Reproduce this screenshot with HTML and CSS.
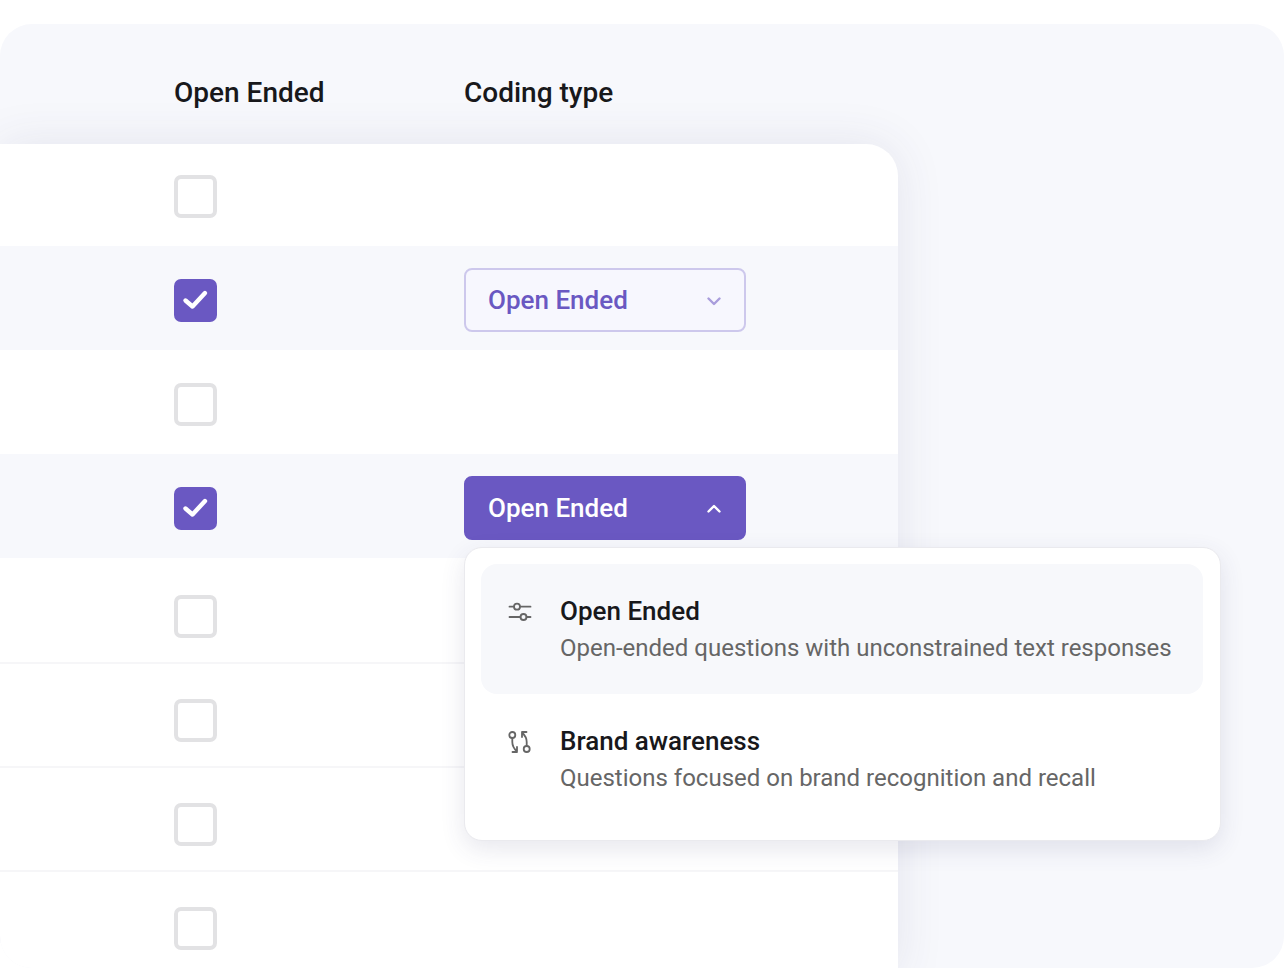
FILE: index.html
```html
<!DOCTYPE html>
<html lang="en">
<head>
<meta charset="utf-8">
<title>Coding type</title>
<link rel="stylesheet" href="styles.css">
</head>
<body>
<main class="panel">
  <header class="head">
    <div class="col-check">Open Ended</div>
    <div class="col-type">Coding type</div>
  </header>
  <section class="table">
    <div class="row first"><div class="col-check"><span class="box"></span></div></div>
    <div class="row tinted">
      <div class="col-check"><span class="box on"><svg width="28" height="28" viewBox="0 0 28 28" fill="none"><path d="M3.500 14.500L10.500 20.500 23 7" stroke="#fff" stroke-width="4.400" stroke-linecap="round" stroke-linejoin="round"/></svg></span></div>
      <div class="col-type">
        <div class="select">Open Ended
          <svg class="chev down" width="14" height="9" viewBox="0 0 14 9" fill="none"><path d="M1.500 1.500L7 7l5.500-5.500" stroke="#a99ddc" stroke-width="2.400" stroke-linecap="round" stroke-linejoin="round"/></svg>
        </div>
      </div>
    </div>
    <div class="row"><div class="col-check"><span class="box"></span></div></div>
    <div class="row tinted">
      <div class="col-check"><span class="box on"><svg width="28" height="28" viewBox="0 0 28 28" fill="none"><path d="M3.500 14.500L10.500 20.500 23 7" stroke="#fff" stroke-width="4.400" stroke-linecap="round" stroke-linejoin="round"/></svg></span></div>
      <div class="col-type">
        <div class="select open">Open Ended
          <svg class="chev" width="14" height="9" viewBox="0 0 14 9" fill="none"><path d="M1.500 7.500L7 2l5.500 5.500" stroke="#fff" stroke-width="2.400" stroke-linecap="round" stroke-linejoin="round"/></svg>
        </div>
      </div>
    </div>
    <div class="row lined tall"><div class="col-check"><span class="box"></span></div></div>
    <div class="row lined"><div class="col-check"><span class="box"></span></div></div>
    <div class="row lined"><div class="col-check"><span class="box"></span></div></div>
    <div class="row lined"><div class="col-check"><span class="box"></span></div></div>
  </section>
  <div class="menu">
    <div class="option active">
      <svg class="opt-icon" width="24" height="24" viewBox="0 0 24 24" fill="none" stroke="#666" stroke-width="1.800" stroke-linecap="round"><path d="M1.500 6.700h4.500M12 6.700h10.500M1.500 17h11M18.500 17h4"/><circle cx="9" cy="6.700" r="3"/><circle cx="15.500" cy="17" r="3"/></svg>
      <div class="opt-text">
        <div class="opt-title">Open Ended</div>
        <div class="opt-desc">Open-ended questions with unconstrained text responses</div>
      </div>
    </div>
    <div class="option">
      <svg class="opt-icon" width="24" height="24" viewBox="0 0 24 24" fill="none" stroke="#666" stroke-width="1.800" stroke-linecap="round" stroke-linejoin="round"><circle cx="4.300" cy="5" r="3"/><circle cx="18.700" cy="19" r="3"/><path d="M4.300 8v4c0 4 2 7 4.700 9.500M4.500 22H9v-5M18.700 16v-4c0-4-2-7-4.700-9.500M18.500 2H14v5"/></svg>
      <div class="opt-text">
        <div class="opt-title">Brand awareness</div>
        <div class="opt-desc">Questions focused on brand recognition and recall</div>
      </div>
    </div>
  </div>
</main>
</body>
</html>
```
FILE: styles.css
```css
html, body {
  margin: 0;
  height: 968px;
  overflow: hidden;
  background: #fff;
  font-family: Roboto, "Liberation Sans", sans-serif;
}
.panel {
  position: relative;
  margin-top: 24px;
  height: 944px;
  background: #f7f8fc;
  border-radius: 32px;
  overflow: hidden;
  display: flow-root;
}
.head {
  height: 120px;
  box-sizing: border-box;
  padding-top: 51px;
  display: flex;
  font-size: 28px;
  line-height: 36px;
  font-weight: 500;
  color: #18181b;
}
.col-check {
  width: 290px;
  margin-left: 174px;
  flex: none;
}
.col-type {
  flex: none;
}
.table {
  width: 898px;
  background: #fff;
  border-radius: 0 32px 0 0;
  box-shadow: 0 0 48px rgba(60, 60, 110, 0.1);
  overflow: hidden;
}
.row {
  height: 104px;
  padding-top: 4px;
  display: flex;
  align-items: center;
  box-sizing: border-box;
}
.first {
  height: 102px;
  padding-top: 2px;
}
.tinted {
  background: #f7f8fc;
}
.lined {
  padding-top: 10px;
  border-bottom: 2px solid #f6f6f8;
}
.tall {
  height: 106px;
  padding-top: 12px;
}
.box {
  display: flex;
  align-items: center;
  justify-content: center;
  box-sizing: border-box;
  width: 43px;
  height: 43px;
  border: 4px solid #e2e2e4;
  border-radius: 7px;
  background: #fff;
}
.box.on {
  background: #6a58c2;
  border: 0;
}
.select {
  box-sizing: border-box;
  width: 282px;
  height: 64px;
  padding: 0 22px;
  display: flex;
  align-items: center;
  justify-content: space-between;
  border: 2px solid #cdc8ec;
  border-radius: 8px;
  font-size: 26px;
  font-weight: 500;
  color: #6a58c2;
  background: #f7f7fe;
}
.select.open {
  background: #6a58c2;
  border-color: #6a58c2;
  color: #fff;
}
.chev {
  margin-right: 1px;
}
.chev.down {
  margin-top: 2px;
}
.menu {
  position: absolute;
  left: 464px;
  top: 523px;
  box-sizing: border-box;
  width: 757px;
  height: 294px;
  padding: 16px 17px 16px 16px;
  background: #fff;
  border: 1px solid #eaeaee;
  border-radius: 18px;
  box-shadow: 0 8px 24px rgba(60, 60, 110, 0.12);
}
.option {
  box-sizing: border-box;
  height: 130px;
  padding: 29px 0 0 27px;
  display: flex;
  gap: 28px;
  border-radius: 16px;
}
.active {
  background: #f7f8fb;
}
.opt-icon {
  flex: none;
  margin-top: 7px;
}
.opt-title {
  font-size: 26px;
  line-height: 36px;
  font-weight: 500;
  color: #18181b;
}
.opt-desc {
  font-size: 24px;
  line-height: 36px;
  color: #666;
  margin-top: 1px;
  white-space: nowrap;
}
```
